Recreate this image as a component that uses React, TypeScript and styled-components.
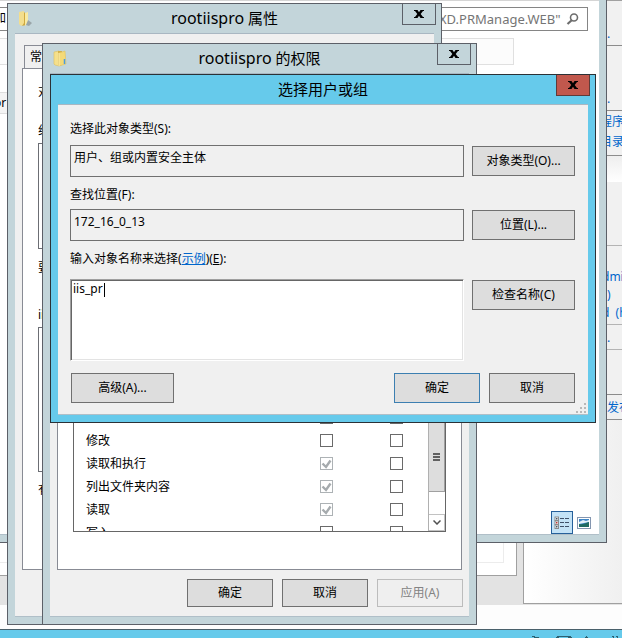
import React from "react";
import styled, { createGlobalStyle, css } from "styled-components";

const FRAME = "#c3d5da";
const FACE = "#f0f0f0";
const ACTIVE = "#66caeb";

const GlobalStyle = createGlobalStyle`
  *, *::before, *::after { box-sizing: border-box; }
  html, body, #root { height: 100%; }
  body { margin: 0; overflow: hidden; }
  body, button, input, textarea {
    font-family: "Noto Sans", "Noto Sans CJK SC", sans-serif;
    font-size: 12px;
    line-height: 18px;
    color: #000;
  }
  p { margin: 0; }
`;

const Desktop = styled.main`
  position: relative;
  display: flex;
  flex-direction: column;
  height: 100vh;
  min-height: 638px;
  overflow: hidden;
  background: #fdfdfd;
`;

/* Management console behind every window */
const Console = styled.section`
  flex: 1;
  display: grid;
  grid-template-columns: 517px 1fr;
  column-gap: 6px;
  background: #e3e3e3;
  max-height: 605px;
`;

const ConsoleMain = styled.div`
  display: flex;
  align-items: flex-end;
  height: 576px;
  padding: 0 12px 12px 0;
  background: #fff;
  border: 1px solid #a0a0a0;
  border-left: 0;
`;

const ConsoleStrip = styled.div`
  flex: 1;
  height: 30px;
  border: 1px solid #ececec;
  border-left: 0;
`;

const Actions = styled.aside`
  height: 604px;
  border: 1px solid #a0a0a0;
  border-right: 0;
  background: linear-gradient(90deg, #fff, #f0f0f0);
  color: #0066cc;
  white-space: nowrap;
  overflow: hidden;
`;

const ActionBlock = styled.div<{ $height: number; $soft?: boolean; $glow?: boolean }>`
  display: flex;
  flex-direction: column;
  justify-content: flex-end;
  height: ${(p) => p.$height}px;
  padding: 0 0 2px 76px;
  border-bottom: 1px solid ${(p) => (p.$soft ? "#b4b4b4" : "#8c8c8c")};
  background: ${(p) => (p.$glow ? "linear-gradient(#eee, #fff 26px, #f1f1f1 26px)" : "#f1f1f1")};
`;

const ActionLink = styled.a<{ $inset?: number; $height?: number }>`
  display: block;
  height: ${(p) => p.$height ?? 18}px;
  padding-left: ${(p) => p.$inset ?? 0}px;
  color: #0066cc;
  text-decoration: none;
`;

const Taskbar = styled.footer`
  flex: none;
  display: flex;
  justify-content: flex-end;
  align-items: flex-start;
  height: 9px;
  margin-top: auto;
  padding: 6px 2px 0 0;
  background: ${ACTIVE};
  border-top: 1px solid #49606b;
  overflow: hidden;
`;

/* Windows on the desktop */
const WindowFrame = styled.section<{ $x: number; $y: number; $w: number; $h: number; $active?: boolean }>`
  position: absolute;
  left: ${(p) => p.$x}px;
  top: ${(p) => p.$y}px;
  width: ${(p) => p.$w}px;
  height: ${(p) => p.$h}px;
  display: flex;
  flex-direction: column;
  padding: 0 7px 7px;
  border: 1px solid ${(p) => (p.$active ? "#2b3136" : "#5c6068")};
  background: ${(p) => (p.$active ? ACTIVE : FRAME)};
`;

const TitleBar = styled.header`
  display: grid;
  grid-template-columns: 32px 1fr 32px;
  align-items: start;
  flex: none;
  height: 29px;
`;

const Title = styled.h1`
  margin: 0;
  font-size: 15px;
  font-weight: 400;
  line-height: 28px;
  text-align: center;
`;

const SiteName = styled.span`
  font-size: 16px;
`;

const FolderSlot = styled.span`
  padding: 6px 0 0 2px;
  line-height: 0;
`;

const CloseButton = styled.button<{ $danger?: boolean }>`
  display: grid;
  place-items: center;
  width: 34px;
  height: 21px;
  padding: 0;
  border: 1px solid ${(p) => (p.$danger ? "#5f3b39" : "#5c6068")};
  border-top: 0;
  background: ${(p) => (p.$danger ? "#c1584d" : FRAME)};
`;

const Client = styled.div`
  flex: 1;
  display: flex;
  flex-direction: column;
  min-height: 0;
  background: ${FACE};
  border-top: 1px solid #a9b7c2;
  border-bottom: 1px solid #b0bfc8;
`;

const Button = styled.button<{ $width: number; $height?: number; $primary?: boolean }>`
  width: ${(p) => p.$width}px;
  height: ${(p) => p.$height ?? 30}px;
  padding: 0;
  border: 1px solid ${(p) => (p.$primary ? "#3c7fb1" : "#707070")};
  background: #ddd;
  &:disabled {
    border-color: #bcbcbc;
    background: #efefef;
    color: #838383;
  }
`;

/* Explorer */
const ExplorerBody = styled.div`
  flex: 1;
  display: flex;
  flex-direction: column;
  background: #fff;
  border-top: 1px solid #d5d5d5;
  border-bottom: 1px solid #b0bfc8;
`;

const AddressRow = styled.div`
  display: flex;
  justify-content: space-between;
  height: 24px;
  margin: 6px 11px 0 0;
`;

const AddressBox = styled.div`
  width: 60px;
  border: 1px solid #888;
  border-left: 0;
  line-height: 20px;
  overflow: hidden;
`;

const SearchBox = styled.label`
  display: flex;
  align-items: center;
  width: 160px;
  padding: 0 7px 0 10px;
  border: 1px solid #858585;
`;

const SearchInput = styled.input`
  flex: 1;
  min-width: 0;
  padding: 0;
  border: 0;
  outline: 0;
  font-size: 13px;
  color: #757575;
`;

const ToolStrip = styled.div`
  height: 27px;
  margin: 7px 85px 0 0;
  border: 1px solid #e0e0e0;
  border-left: 0;
  background: #fcfcfc;
`;

const TreeItem = styled.div`
  width: 60px;
  height: 22px;
  margin-top: 27px;
  border: 1px solid #dedede;
  border-left: 0;
  background: #f4f4f4;
  line-height: 20px;
`;

const ViewSwitch = styled.div`
  display: flex;
  justify-content: flex-end;
  margin-top: auto;
  padding-right: 4px;
`;

const ViewButton = styled.button<{ $on?: boolean }>`
  display: grid;
  place-items: center;
  width: 22px;
  height: 23px;
  padding: 0;
  border: 1px solid ${(p) => (p.$on ? "#26609a" : "transparent")};
  background: ${(p) => (p.$on ? "#c3e2f6" : "transparent")};
`;

/* Property sheets */
const TabStrip = styled.div`
  flex: none;
  height: 34px;
  padding: 11px 0 0 9px;
`;

const Tab = styled.button`
  height: 23px;
  padding: 0 5px;
  border: 1px solid #888b94;
  border-bottom: 0;
  background: ${FACE};
`;

const Page = styled.div`
  flex: 1;
  display: flex;
  flex-direction: column;
  min-height: 0;
  margin: 0 7px;
  padding: 0 15px;
  border: 1px solid #888b94;
  background: #fff;
`;

const PageLabel = styled.p<{ $gap: number }>`
  flex: none;
  height: 18px;
  margin-top: ${(p) => p.$gap}px;
  white-space: nowrap;
`;

const ListBox = styled.div<{ $height: number; $gap: number }>`
  flex: none;
  height: ${(p) => p.$height}px;
  margin-top: ${(p) => p.$gap}px;
  border: 1px solid #6c6e74;
`;

const SheetFoot = styled.footer`
  flex: none;
  display: flex;
  justify-content: flex-end;
  gap: 9px;
  height: 46px;
  padding: 9px 6px 0;
`;

const PermissionPage = styled(Page)`
  margin-top: 20px;
  justify-content: flex-end;
  padding-bottom: 37px;
`;

const PermissionList = styled.div`
  display: grid;
  grid-template-columns: 1fr 17px;
  height: 127px;
  border: 1px solid #666;
`;

const TableClip = styled.div`
  overflow: hidden;
`;

const Table = styled.table`
  width: 100%;
  border-collapse: collapse;
  table-layout: fixed;
  td, th { height: 23px; padding: 0; font-weight: 400; text-align: left; }
  th { padding-left: 12px; }
  td { width: 70px; line-height: 0; }
  td:last-child { width: 38px; }
`;

const Check = styled.input`
  appearance: none;
  display: block;
  width: 13px;
  height: 13px;
  margin: 0;
  border: 1px solid #6a6a6a;
  background: #fff;
  &:disabled {
    border-color: #adb2b5;
    background: #fff url("data:image/svg+xml,%3Csvg xmlns='http://www.w3.org/2000/svg' viewBox='0 0 11 11'%3E%3Cpath d='M1.5 5.500l3.500 3.500 4.500-6.500' fill='none' stroke='%23a6abae' stroke-width='2.400'/%3E%3C/svg%3E") center / 11px 11px no-repeat;
  }
`;

const ScrollBar = styled.div`
  display: flex;
  flex-direction: column;
  border-left: 1px solid #b0b0b0;
`;

const Thumb = styled.div`
  flex: 1;
  display: flex;
  align-items: center;
  justify-content: center;
  padding-top: 17px;
  border-bottom: 1px solid #a0a0a0;
  border-right: 1px solid #a0a0a0;
  background: #ddd;
`;

const ScrollDown = styled.button`
  display: grid;
  place-items: center;
  height: 17px;
  margin-top: 22px;
  padding: 0;
  border: 1px solid #c2c2c2;
  border-left: 0;
  background: #fff;
`;

/* Selection dialog */
const DialogForm = styled.form`
  flex: 1;
  position: relative;
  display: flex;
  flex-direction: column;
  padding: 15px 13px 11px 12px;
`;

const FieldRow = styled.div`
  display: grid;
  grid-template-columns: 1fr 103px;
  column-gap: 8px;
  align-items: start;
  margin-bottom: 9px;
`;

const FieldLabel = styled.div<{ $gap: number }>`
  grid-column: 1 / -1;
  height: 18px;
  margin-bottom: ${(p) => p.$gap}px;
`;

const fieldBox = css`
  display: block;
  width: 100%;
  margin: 0;
  outline: 0;
  border-radius: 0;
  resize: none;
`;

const ReadOnlyField = styled.input`
  ${fieldBox}
  height: 32px;
  padding: 0 3px 8px;
  border: 1px solid #707070;
  background: ${FACE};
`;

const NamesField = styled.div`
  display: flex;
  height: 82px;
  border: 1px solid #a0a0a0;
  border-right-color: #fff;
  border-bottom-color: #fff;
  background: #fff;
  box-shadow: inset 1px 1px #666, inset -1px -1px #e3e3e3;
`;

const NamesInput = styled.textarea`
  ${fieldBox}
  width: 33px;
  flex: none;
  height: 18px;
  padding: 0 0 0 2px;
  border: 0;
  background: transparent;
  overflow: hidden;
  white-space: pre;
`;

const Caret = styled.span`
  width: 1px;
  height: 14px;
  margin-top: 3px;
  background: #000;
`;

const SideButton = styled(Button)`
  margin-top: 1px;
`;

const ExampleLink = styled.a`
  color: #0066cc;
  text-decoration: underline;
`;

const DialogFoot = styled.footer`
  display: grid;
  grid-template-columns: 103px 1fr 86px 86px;
  column-gap: 9px;
  margin: auto 0 0 1px;
`;

const FootButton = styled(Button)`
  &:nth-of-type(2) { grid-column: 3; }
`;

const Grip = styled.svg`
  position: absolute;
  right: 2px;
  bottom: 1px;
`;

const CloseGlyph = () => (
  <svg width="10" height="8" viewBox="0 0 10 8" aria-hidden="true">
    <path d="M0 0h3.5L5 2.2 6.5 0H10v1H9L6.7 4 9 7h1v1H6.5L5 5.8 3.5 8H0V7h1l2.300-3L1 1H0z" fill="#000" />
  </svg>
);

const FolderGlyph = ({ open = false }: { open?: boolean }) => (
  <svg width="16" height="18" viewBox="0 0 16 18" aria-hidden="true">
    {open ? (
      <>
        <path d="M2 2l5-1 1 13-4 2-2-2z" fill="#f3de8e" />
        <path d="M7 2l2 2v11l-4 1 2-3z" fill="#cfa93f" />
        <path d="M8 3l3-1v11l-3 3z" fill="#f8eaa4" />
        <path d="M11 10l4 3-3 3-3-1z" fill="#9aa5a8" />
      </>
    ) : (
      <>
        <path d="M2 2l5-1v15l-4-1-1-1z" fill="#f5e08c" stroke="#dcc05e" strokeWidth=".6" />
        <path d="M6 1h4v14l-4 1z" fill="#d2b04a" />
        <path d="M7 3l6-2 1 13-7 2z" fill="#f4da78" stroke="#dfc25f" strokeWidth=".6" />
        <path d="M7 3v13" stroke="#fff3b8" />
        <path d="M12.5 9v5" stroke="#4a9be0" strokeWidth="1.5" />
      </>
    )}
  </svg>
);

const SearchGlyph = () => (
  <svg width="14" height="14" viewBox="0 0 14 14" fill="none" stroke="#6d6d6d" aria-hidden="true">
    <circle cx="8" cy="5.5" r="3.500" strokeWidth="1.600" />
    <path d="M6 8l-4.500 4" strokeWidth="2.200" />
  </svg>
);

const DetailsGlyph = () => (
  <svg width="16" height="14" viewBox="0 0 16 14" aria-hidden="true">
    {[0.5, 4.5, 8.5].map((y) => (
      <g key={y}>
        <rect x="1" y={y + 0.5} width="3.500" height="3.500" fill="#fff" stroke="#8b8b8b" />
        <rect x="2" y={y + 1.5} width="1.500" height="1.500" fill={y === 4.5 ? "#b33" : "#456"} />
        <path d={`M6 ${y + 2}h4M11 ${y + 2}h4`} stroke="#3f5068" />
      </g>
    ))}
  </svg>
);

const PictureGlyph = () => (
  <svg width="14" height="12" viewBox="0 0 14 12" aria-hidden="true">
    <rect x=".5" y=".5" width="13" height="11" fill="#fff" stroke="#8496b0" />
    <rect x="2" y="2" width="10" height="8" fill="#3f86c6" />
    <path d="M2 5l4-2 3 1 3-1v2L2 7z" fill="#e3f1f8" />
    <path d="M2 7c4 1 6-1 10-2v5H2z" fill="#1f6b62" />
  </svg>
);

const TrayGlyphs = () => (
  <svg width="90" height="2" viewBox="0 0 90 2" fill="none" stroke="#2d5f70" aria-hidden="true">
    <path d="M2 .5h3M4 1.500h5M27 .5h14M26 1.500h3M38 1.500h4M56 .5h1M55 1.500h3M82 .5h2M86 .5h2M83 1.500h1M87 1.500h1" />
  </svg>
);

type Permission = { name: string; inherited: boolean };

const permissions: Permission[] = [
  { name: "完全控制", inherited: false },
  { name: "修改", inherited: false },
  { name: "读取和执行", inherited: true },
  { name: "列出文件夹内容", inherited: true },
  { name: "读取", inherited: true },
  { name: "写入", inherited: false },
];

const gripDots = [[8, 0], [4, 4], [8, 4], [0, 8], [4, 8], [8, 8]];

export default function App() {
  return (
    <>
      <GlobalStyle />
      <Desktop>
        <Console>
          <ConsoleMain><ConsoleStrip /></ConsoleMain>
          <Actions>
            <ActionBlock $height={45}><ActionLink href="#" $inset={7}>.</ActionLink></ActionBlock>
            <ActionBlock $height={65}><ActionLink href="#" $inset={7}>.</ActionLink></ActionBlock>
            <ActionBlock $height={45}>
              <ActionLink href="#" $height={20}>程序</ActionLink>
              <ActionLink href="#" $height={20}>目录</ActionLink>
            </ActionBlock>
            <ActionBlock $height={90} $soft $glow />
            <ActionBlock $height={79} $soft>
              <ActionLink href="#" $inset={2}>dmin</ActionLink>
              <ActionLink href="#" $inset={7}>)</ActionLink>
              <ActionLink href="#" $inset={2}>d&nbsp; (h</ActionLink>
            </ActionBlock>
            <ActionBlock $height={25} $soft><ActionLink href="#" $inset={7}>.</ActionLink></ActionBlock>
            <ActionBlock $height={45} />
            <ActionBlock $height={25}><ActionLink href="#" $inset={7}>发布</ActionLink></ActionBlock>
          </Actions>
        </Console>
        <Taskbar><TrayGlyphs /></Taskbar>

        <WindowFrame $x={-14} $y={-1} $w={621} $h={544}>
          <ExplorerBody>
            <AddressRow>
              <AddressBox>加</AddressBox>
              <SearchBox>
                <SearchInput aria-label="搜索" defaultValue={'XD.PRManage.WEB"'} />
                <SearchGlyph />
              </SearchBox>
            </AddressRow>
            <ToolStrip />
            <TreeItem>or</TreeItem>
            <ViewSwitch>
              <ViewButton $on aria-label="详细信息"><DetailsGlyph /></ViewButton>
              <ViewButton aria-label="大图标"><PictureGlyph /></ViewButton>
            </ViewSwitch>
          </ExplorerBody>
        </WindowFrame>

        <WindowFrame $x={7} $y={3} $w={435} $h={622}>
          <TitleBar>
            <FolderSlot><FolderGlyph open /></FolderSlot>
            <Title><SiteName>rootiispro</SiteName> 属性</Title>
            <CloseButton aria-label="关闭"><CloseGlyph /></CloseButton>
          </TitleBar>
          <Client>
            <TabStrip><Tab>常规</Tab></TabStrip>
            <Page>
              <PageLabel $gap={14}>对象名称:</PageLabel>
              <PageLabel $gap={21}>组或用户名(G):</PageLabel>
              <ListBox $height={106} $gap={3} />
              <PageLabel $gap={10}>要更改权限，请单击“编辑”。</PageLabel>
              <PageLabel $gap={29}>iis 的权限(P)</PageLabel>
              <ListBox $height={145} $gap={3} />
              <PageLabel $gap={9}>有关特殊权限或高级设置，请单击“高级”。</PageLabel>
            </Page>
            <SheetFoot />
          </Client>
        </WindowFrame>

        <WindowFrame $x={42} $y={43} $w={435} $h={582}>
          <TitleBar>
            <FolderSlot><FolderGlyph /></FolderSlot>
            <Title><SiteName>rootiispro</SiteName> 的权限</Title>
            <CloseButton aria-label="关闭"><CloseGlyph /></CloseButton>
          </TitleBar>
          <Client>
            <PermissionPage>
              <PermissionList>
                <TableClip>
                  <Table>
                    <tbody>
                      {permissions.map(({ name, inherited }) => (
                        <tr key={name}>
                          <th scope="row">{name}</th>
                          <td>
                            <Check type="checkbox" aria-label={`${name} 允许`} defaultChecked={inherited} disabled={inherited} />
                          </td>
                          <td>
                            <Check type="checkbox" aria-label={`${name} 拒绝`} />
                          </td>
                        </tr>
                      ))}
                    </tbody>
                  </Table>
                </TableClip>
                <ScrollBar>
                  <Thumb>
                    <svg width="8" height="9" viewBox="0 0 8 9" aria-hidden="true">
                      <path d="M0 1h7M0 4h7M0 7h7" stroke="#606060" strokeWidth="2" />
                    </svg>
                  </Thumb>
                  <ScrollDown aria-label="向下滚动">
                    <svg width="8" height="5" viewBox="0 0 8 5" fill="none" aria-hidden="true">
                      <path d="M.5 .5L4 4 7.500 .5" stroke="#505050" strokeWidth="1.500" />
                    </svg>
                  </ScrollDown>
                </ScrollBar>
              </PermissionList>
            </PermissionPage>
            <SheetFoot>
              <Button $width={86} $height={28}>确定</Button>
              <Button $width={86} $height={28}>取消</Button>
              <Button $width={86} $height={28} disabled>应用(A)</Button>
            </SheetFoot>
          </Client>
        </WindowFrame>

        <WindowFrame $x={50} $y={74} $w={546} $h={349} $active>
          <TitleBar>
            <span />
            <Title>选择用户或组</Title>
            <CloseButton $danger aria-label="关闭"><CloseGlyph /></CloseButton>
          </TitleBar>
          <Client>
            <DialogForm onSubmit={(e: React.FormEvent) => e.preventDefault()}>
              <FieldRow>
                <FieldLabel $gap={7}><label htmlFor="type">选择此对象类型(S):</label></FieldLabel>
                <ReadOnlyField id="type" readOnly value="用户、组或内置安全主体" />
                <SideButton type="button" $width={103}>对象类型(O)...</SideButton>
              </FieldRow>
              <FieldRow>
                <FieldLabel $gap={5}><label htmlFor="place">查找位置(F):</label></FieldLabel>
                <ReadOnlyField id="place" readOnly value="172_16_0_13" />
                <SideButton type="button" $width={103}>位置(L)...</SideButton>
              </FieldRow>
              <FieldRow>
                <FieldLabel $gap={11}>
                  <label htmlFor="names">输入对象名称来选择</label>(<ExampleLink href="#">示例</ExampleLink>)(<u>E</u>):
                </FieldLabel>
                <NamesField>
                  <NamesInput id="names" rows={1} defaultValue="iis_pr" />
                  <Caret />
                </NamesField>
                <SideButton type="button" $width={103}>检查名称(C)</SideButton>
              </FieldRow>
              <DialogFoot>
                <FootButton type="button" $width={103}>高级(A)...</FootButton>
                <FootButton $width={86} $primary>确定</FootButton>
                <FootButton type="button" $width={86}>取消</FootButton>
              </DialogFoot>
              <Grip width="10" height="10" viewBox="0 0 10 10" aria-hidden="true">
                {gripDots.map(([x, y]) => (
                  <rect key={`${x}-${y}`} x={x} y={y} width="2" height="2" fill="#b8b8b8" />
                ))}
              </Grip>
            </DialogForm>
          </Client>
        </WindowFrame>
      </Desktop>
    </>
  );
}
